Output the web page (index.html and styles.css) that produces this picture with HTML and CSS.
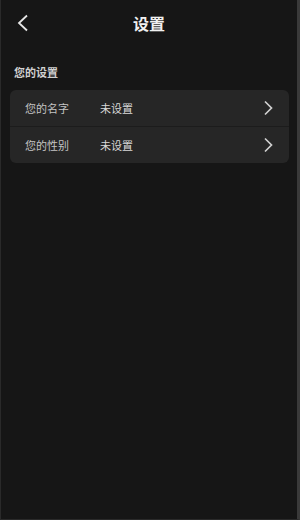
FILE: index.html
```html
<!DOCTYPE html>
<html lang="zh">
<head>
  <meta charset="UTF-8" />
  <title>设置</title>
  <link rel="stylesheet" href="styles.css">
</head>
<body>
  <div class="pantalla">
    <div class="cabecera">
      <span class="atras">
        <svg width="14" height="18" viewBox="0 0 14 18"><path d="M11 1.5 L3 9 L11 16.5" fill="none" stroke="#e6e6e6" stroke-width="1.8"/></svg>
      </span>
      <h1>设置</h1>
    </div>

    <div class="seccion">您的设置</div>

    <div class="tarjeta">
      <div class="fila">
        <span class="etiqueta">您的名字</span>
        <span class="valor">未设置</span>
        <svg class="flecha" width="10" height="16" viewBox="0 0 10 16"><path d="M2 1.5 L8.5 8 L2 14.5" fill="none" stroke="#d0d0d0" stroke-width="1.7"/></svg>
      </div>
      <div class="fila">
        <span class="etiqueta">您的性别</span>
        <span class="valor">未设置</span>
        <svg class="flecha" width="10" height="16" viewBox="0 0 10 16"><path d="M2 1.5 L8.5 8 L2 14.5" fill="none" stroke="#d0d0d0" stroke-width="1.7"/></svg>
      </div>
    </div>
  </div>
</body>
</html>
```

FILE: styles.css
```css
:root {
  --fondo: #161616;
  --tarjeta: #262626;
  --linea: #1c1c1c;
  --texto: #cfcfcf;
}

body {
  margin: 0;
  background-color: var(--fondo);
  font-family: "Noto Sans CJK SC", "Noto Sans", sans-serif;
  color: var(--texto);
}

.pantalla {
  box-sizing: border-box;
  width: 300px;
  height: 520px;
  border-left: 1px solid #2a2a2a;
  border-right: 3px solid #3a3a3a;
  border-bottom: 1px solid #2a2a2a;
  background-color: var(--fondo);
}

.cabecera {
  position: relative;
  height: 46px;
  display: flex;
  align-items: center;
  justify-content: center;
}

.atras {
  position: absolute;
  left: 15px;
  top: 13px;
}

.cabecera h1 {
  margin: 0;
  font-size: 16px;
  font-weight: 700;
  color: #f0f0f0;
}

.seccion {
  padding: 18px 0 0 13px;
  font-size: 11px;
  font-weight: 700;
  color: #d0d0d0;
  height: 26px;
}

.tarjeta {
  margin-left: 9px;
  width: 279px;
  background-color: var(--tarjeta);
  border-radius: 6px;
  overflow: hidden;
}

.fila {
  display: flex;
  align-items: center;
  height: 36px;
  padding: 0 16px 0 15px;
  font-size: 11px;
}

.fila + .fila {
  border-top: 1px solid var(--linea);
}

.etiqueta {
  width: 75px;
  color: #c4c4c4;
}

.valor {
  flex: 1;
  color: #d8d8d8;
}
```
